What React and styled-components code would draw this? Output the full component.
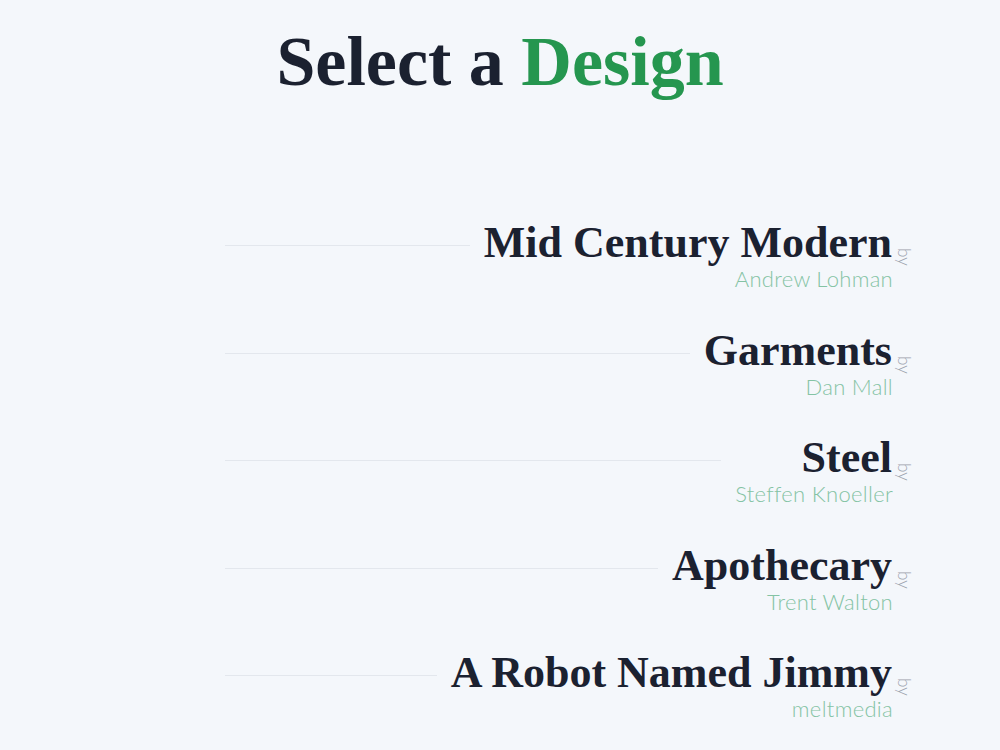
import React from 'react';
import styled, { createGlobalStyle } from 'styled-components';

const GlobalStyle = createGlobalStyle`
  html, body {
    margin: 0;
    padding: 0;
    background: #f4f7fb;
  }
  body {
    font-family: "Liberation Serif", serif;
  }
`;

const Page = styled.div`
  width: 1000px;
  height: 750px;
  overflow: hidden;
  background: #f4f7fb;
`;

const Heading = styled.h1`
  margin: 0;
  padding-top: 20px;
  text-align: center;
  font-family: "Liberation Serif", serif;
  font-weight: 700;
  font-size: 70px;
  line-height: 84px;
  letter-spacing: 0;
  color: #1b2130;

  span {
    color: #25964f;
  }
`;

const List = styled.ul`
  list-style: none;
  margin: 115px 0 0 225px;
  padding: 0;
  width: 686px;
`;

const Row = styled.li`
  display: flex;
  align-items: flex-start;
  height: 107.5px;
`;

const Rule = styled.div`
  flex: 1;
  height: 1px;
  margin-top: 26px;
  margin-right: 14px;
  background: #e3e7ed;
`;

const Entry = styled.div`
  display: flex;
  flex-direction: column;
  align-items: flex-end;
`;

const TitleLine = styled.div`
  display: flex;
  align-items: flex-end;
`;

const Title = styled.span`
  font-family: "Liberation Serif", serif;
  font-weight: 700;
  font-size: 44px;
  line-height: 48px;
  color: #1b2130;
`;

const By = styled.span`
  writing-mode: vertical-rl;
  font-family: "Lato", sans-serif;
  font-weight: 300;
  font-size: 17px;
  line-height: 14px;
  color: #9aa1ab;
  margin: 0 0 1px 5px;
`;

const Author = styled.span`
  margin: 3px 18px 0 0;
  font-family: "Lato", sans-serif;
  font-weight: 300;
  font-size: 22px;
  line-height: 18px;
  letter-spacing: 0.3px;
  color: #84c3a4;
`;

const designs = [
  { title: 'Mid Century Modern', author: 'Andrew Lohman' },
  { title: 'Garments', author: 'Dan Mall' },
  { title: 'Steel', author: 'Steffen Knoeller' },
  { title: 'Apothecary', author: 'Trent Walton' },
  { title: 'A Robot Named Jimmy', author: 'meltmedia' },
];

const App = () => {
  return (
    <Page>
      <GlobalStyle />
      <Heading>
        Select a <span>Design</span>
      </Heading>
      <List>
        {designs.map((d) => (
          <Row key={d.title}>
            <Rule />
            <Entry>
              <TitleLine>
                <Title>{d.title}</Title>
                <By>by</By>
              </TitleLine>
              <Author>{d.author}</Author>
            </Entry>
          </Row>
        ))}
      </List>
    </Page>
  );
};

export default App;
